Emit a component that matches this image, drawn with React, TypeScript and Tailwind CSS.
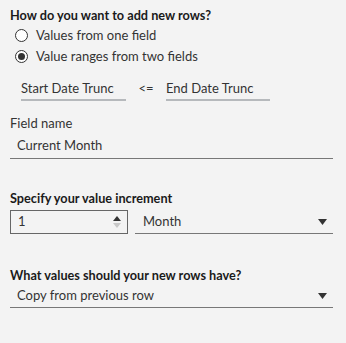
import React from "react";

const Caret = () => (
  <svg width="9" height="6" viewBox="0 0 9 6" className="block">
    <path d="M0 0 H9 L4.5 6 Z" fill="#333" />
  </svg>
);

export default function App() {
  return (
    <div
      className="w-[346px] h-[343px] bg-[#f3f3f3] text-[#333] pl-[10px] pr-[13px] pt-[6px]"
      style={{ fontFamily: "Lato, 'Noto Sans', sans-serif" }}
    >
      <div className="text-[12.7px] font-bold leading-[18px] text-[#1a1a1a]">How do you want to add new rows?</div>
      <div className="flex flex-col gap-[8px] mt-[5px] pl-[5px]">
        <label className="flex items-center gap-[8px] text-[13px] leading-[13px] text-[#333]">
          <span className="w-[13px] h-[13px] rounded-full border border-[#333] bg-white" />
          Values from one field
        </label>
        <label className="flex items-center gap-[8px] text-[13px] leading-[13px] text-[#333]">
          <span className="w-[13px] h-[13px] rounded-full border border-[#333] bg-white flex items-center justify-center">
            <span className="w-[7px] h-[7px] rounded-full bg-[#333]" />
          </span>
          Value ranges from two fields
        </label>
      </div>
      <div className="flex items-end mt-[16px] pl-[11px] text-[13px]">
        <div className="w-[105px] border-b-2 border-[#b6b9bc] pb-[2px] leading-[18px]">Start Date Trunc</div>
        <div className="w-[40px] text-center pb-[4px] leading-[18px]">&lt;=</div>
        <div className="w-[104px] border-b-2 border-[#b6b9bc] pb-[2px] leading-[18px]">End Date Trunc</div>
      </div>
      <div className="mt-[13px] text-[13px] leading-[18px]">Field name</div>
      <div className="mt-[4px] border-b border-[#777] pl-[7px] pb-[4px] text-[13px] leading-[18px]">Current Month</div>
      <div className="mt-[30px] text-[12.7px] font-bold leading-[18px] text-[#1a1a1a]">Specify your value increment</div>
      <div className="flex items-end gap-[7px] mt-[3px]">
        <div className="w-[118px] h-[24px] border border-[#666] flex items-center justify-between pl-[7px] pr-[6px] text-[13px]">
          <span>1</span>
          <span className="flex flex-col gap-[2px]">
            <svg width="8" height="5" viewBox="0 0 8 5" className="block"><path d="M0 5 H8 L4 0 Z" fill="#333" /></svg>
            <svg width="8" height="5" viewBox="0 0 8 5" className="block"><path d="M0 0 H8 L4 5 Z" fill="#c8c8c8" /></svg>
          </span>
        </div>
        <div className="flex-1 border-b border-[#777] h-[24px] flex items-center justify-between pl-[8px] pr-[6px] text-[13px]">
          <span>Month</span>
          <Caret />
        </div>
      </div>
      <div className="mt-[32px] text-[12.7px] font-bold leading-[18px] text-[#1a1a1a]">What values should your new rows have?</div>
      <div className="mt-[0px] border-b border-[#777] h-[24px] flex items-center justify-between pl-[7px] pr-[6px] text-[13px]">
        <span>Copy from previous row</span>
        <Caret />
      </div>
    </div>
  );
}
